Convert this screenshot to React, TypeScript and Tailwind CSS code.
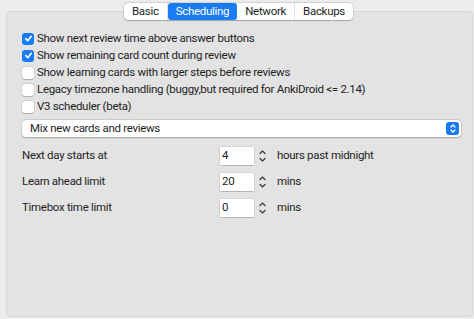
import React from "react";

function Check({ checked }: { checked: boolean }) {
  return checked ? (
    <span className="w-[12px] h-[12px] rounded-[3px] bg-[#1a7cf5] flex items-center justify-center shrink-0">
      <svg width="9" height="9" viewBox="0 0 10 10">
        <path d="M2 5.2 L4.2 7.4 L8 2.6" stroke="white" strokeWidth="1.9" fill="none" strokeLinecap="round" strokeLinejoin="round" />
      </svg>
    </span>
  ) : (
    <span className="w-[12px] h-[12px] rounded-[3px] bg-white shadow-[0_0_0_0.5px_rgba(0,0,0,0.12),0_0.5px_1px_rgba(0,0,0,0.18)] shrink-0" />
  );
}

function Stepper() {
  return (
    <span className="w-[10px] h-[20px] flex flex-col items-center justify-center">
      <svg width="9" height="18" viewBox="0 0 9 18">
        <path d="M2 6.5 L4.5 4 L7 6.5" stroke="#333" strokeWidth="1.2" fill="none" strokeLinecap="round" />
        <path d="M2 11.5 L4.5 14 L7 11.5" stroke="#333" strokeWidth="1.2" fill="none" strokeLinecap="round" />
      </svg>
    </span>
  );
}

function SpinRow({ label, value, unit }: { label: string; value: string; unit: string }) {
  return (
    <div className="flex items-center h-[26px]">
      <div className="w-[198px]">{label}</div>
      <div className="w-[34px] h-[18px] bg-white shadow-[0_0_0_0.5px_rgba(0,0,0,0.12),0_0.5px_1px_rgba(0,0,0,0.15)] pl-[2px] flex items-center">{value}</div>
      <div className="ml-[3px]"><Stepper /></div>
      <div className="ml-[10px]">{unit}</div>
    </div>
  );
}

export default function App() {
  const tabs = ["Basic", "Scheduling", "Network", "Backups"];
  return (
    <div className="w-[474px] h-[319px] bg-[#ececec] text-[#1e1e1e] text-[11.5px] tracking-[-0.3px] relative" style={{ fontFamily: 'Roboto, "Liberation Sans", sans-serif' }}>
      <div className="absolute left-[6px] right-[1px] top-[11px] bottom-[2px] bg-[#e3e3e3] border border-[#d6d6d6] rounded-[4px]" />
      <div className="relative pt-[3px] flex justify-center">
        <div className="flex bg-white rounded-[4px] h-[17px] shadow-[0_0_0_0.5px_rgba(0,0,0,0.18),0_0.5px_1px_rgba(0,0,0,0.2)] ml-[3px]">
          {tabs.map((t) => (
            <div
              key={t}
              className={
                t === "Scheduling"
                  ? "px-[8px] bg-[#1a7cf5] text-white rounded-[3px] flex items-center"
                  : "px-[8px] flex items-center border-r border-[#e0e0e0] last:border-r-0"
              }
            >
              {t}
            </div>
          ))}
        </div>
      </div>
      <div className="relative pl-[22px] pr-[13px] pt-[10px]">
        <div className="flex flex-col">
          {[
            ["Show next review time above answer buttons", true],
            ["Show remaining card count during review", true],
            ["Show learning cards with larger steps before reviews", false],
            ["Legacy timezone handling (buggy,but required for AnkiDroid <= 2.14)", false],
            ["V3 scheduler (beta)", false],
          ].map(([label, c]) => (
            <div key={label as string} className="flex items-center gap-[3px] h-[17px]">
              <Check checked={c as boolean} />
              <span>{label as string}</span>
            </div>
          ))}
        </div>
        <div className="mt-[5px] h-[17px] bg-white rounded-[4px] shadow-[0_0_0_0.5px_rgba(0,0,0,0.12),0_0.5px_1.5px_rgba(0,0,0,0.25)] flex items-center justify-between pl-[8px] pr-[2px]">
          <span>Mix new cards and reviews</span>
          <span className="w-[13px] h-[13px] rounded-[3px] bg-[#1a7cf5] flex items-center justify-center">
            <svg width="8" height="11" viewBox="0 0 8 11">
              <path d="M2 4 L4 2 L6 4" stroke="white" strokeWidth="1.3" fill="none" strokeLinecap="round" />
              <path d="M2 7 L4 9 L6 7" stroke="white" strokeWidth="1.3" fill="none" strokeLinecap="round" />
            </svg>
          </span>
        </div>
        <div className="mt-[6px] flex flex-col">
          <SpinRow label="Next day starts at" value="4" unit="hours past midnight" />
          <SpinRow label="Learn ahead limit" value="20" unit="mins" />
          <SpinRow label="Timebox time limit" value="0" unit="mins" />
        </div>
      </div>
    </div>
  );
}
